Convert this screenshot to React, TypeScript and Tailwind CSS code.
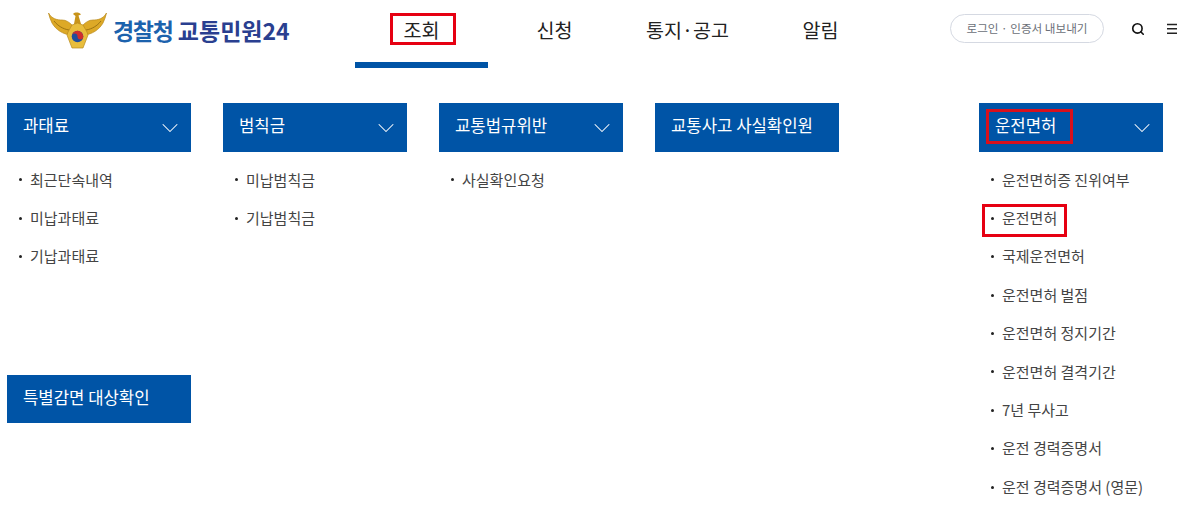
import React from "react";
import { ChevronDown, Search } from "lucide-react";

const font = "font-['Noto_Sans_CJK_KR','Noto_Sans',sans-serif]";

function Emblem() {
  return (
    <svg width="60" height="38" viewBox="0 0 60 38" className="shrink-0">
      {/* wings */}
      <path d="M0.5 2 C4 8 9 9 14 9 C18 9 21 11 24 14 L22 24 C15 23 8 19 4 12 C2.5 9 1.2 5 0.5 2 Z" fill="#dda927" stroke="#b98a1c" strokeWidth="0.7" />
      <path d="M58.5 2 C55 8 50 9 45 9 C41 9 38 11 35 14 L37 24 C44 23 51 19 55 12 C56.5 9 57.8 5 58.5 2 Z" fill="#dda927" stroke="#b98a1c" strokeWidth="0.7" />
      <path d="M6 10 C10 15 15 18 21 19 M53 10 C49 15 44 18 38 19" stroke="#9c7412" strokeWidth="1" fill="none" />
      {/* head */}
      <path d="M25 3 C27 1 31 1 33 3.5 L30.5 4.5 L33 13 L26 13 L27.5 5 Z" fill="#c8941a" />
      {/* shield */}
      <path d="M20 21 L24 14 L29.5 12 L35 14 L39 21 L40 24 L35 37 L24 37 L19 24 Z" fill="#e8bd3c" stroke="#b98a1c" strokeWidth="0.7" />
      <circle cx="29.5" cy="25.5" r="5.8" fill="#1f4e9c" />
      <path d="M23.7 25.5 A5.8 5.8 0 0 1 35.3 25.5 A2.9 2.9 0 0 1 29.5 25.5 A2.9 2.9 0 0 0 23.7 25.5 Z" fill="#cf2e2e" />
    </svg>
  );
}

function Hamburger() {
  return (
    <svg width="12" height="12" viewBox="0 0 12 12" className="text-[#222]">
      <path d="M1 1.5h10M1 5.8h10M1 10.2h10" stroke="currentColor" strokeWidth="1.6" />
    </svg>
  );
}

function Header() {
  const nav = ["조회", "신청", "통지·공고", "알림"];
  return (
    <header className="flex h-[68px] items-start">
      <div className="flex w-[355px] items-center gap-[5px] pl-[48px] pt-[11px]">
        <Emblem />
        <div className="whitespace-nowrap text-[23px] leading-[38px] font-bold">
          <span className="tracking-[-1.3px] text-[#1c62ad]">경찰청</span>{" "}
          <span className="text-[#2a3f90]">교통민원24</span>
        </div>
      </div>
      <nav className="flex">
        {nav.map((label, i) => (
          <div
            key={label}
            className={`flex h-[68px] w-[133px] justify-center pt-[15px] text-[19.6px] leading-[30px] text-[#222] ${
              i === 0 ? "border-b-[6px] border-[#0054a6]" : ""
            }`}
          >
            {label}
          </div>
        ))}
      </nav>
      <div className="ml-auto flex items-center pr-[6px] pt-[14px]">
        <div className="flex h-[29px] w-[154px] items-center justify-center rounded-full border border-[#d5d9e2] text-[11.6px] text-[#6b6f78]">
          로그인 · 인증서 내보내기
        </div>
        <Search size={14} strokeWidth={2.8} className="ml-[27px] text-[#111]" />
        <div className="ml-[21px] flex">
          <Hamburger />
        </div>
      </div>
    </header>
  );
}

function TitleBar({ title, arrow = true, short = false }: { title: string; arrow?: boolean; short?: boolean }) {
  return (
    <div
      className={`flex items-center justify-between bg-[#0054a6] pl-4 pr-[7px] text-[16.7px] text-white ${
        short ? "h-[48px]" : "h-[49px]"
      }`}
    >
      <span className="pb-[3px]">{title}</span>
      {arrow && <ChevronDown size={28} strokeWidth={0.9} />}
    </div>
  );
}

function Menu({
  title,
  items = [],
  arrow = true,
  short = false,
}: {
  title: string;
  items?: string[];
  arrow?: boolean;
  short?: boolean;
}) {
  return (
    <div className="w-[184px]">
      <TitleBar title={title} arrow={arrow} short={short} />
      {items.length > 0 && (
        <ul className="mt-[8.7px]">
          {items.map((item) => (
            <li key={item} className="flex h-[38.4px] items-center pl-3 text-[15px] whitespace-nowrap text-[#444]">
              <span className="mr-[8px] h-[3px] w-[3px] rounded-full bg-[#222]" />
              {item}
            </li>
          ))}
        </ul>
      )}
    </div>
  );
}

export default function App() {
  return (
    <div className={`relative h-[506px] w-[1184px] overflow-hidden bg-white ${font}`}>
      <Header />
      <main className="flex gap-8 pl-[7px] pt-[35px]">
        <div className="flex w-[184px] flex-col gap-[99px]">
          <Menu title="과태료" items={["최근단속내역", "미납과태료", "기납과태료"]} />
          <Menu title="특별감면 대상확인" arrow={false} short />
        </div>
        <Menu title="범칙금" items={["미납범칙금", "기납범칙금"]} />
        <Menu title="교통법규위반" items={["사실확인요청"]} />
        <Menu title="교통사고 사실확인원" arrow={false} />
        <div className="ml-[108px]">
          <Menu
            title="운전면허"
            items={[
              "운전면허증 진위여부",
              "운전면허",
              "국제운전면허",
              "운전면허 벌점",
              "운전면허 정지기간",
              "운전면허 결격기간",
              "7년 무사고",
              "운전 경력증명서",
              "운전 경력증명서 (영문)",
            ]}
          />
        </div>
      </main>
      {/* red annotation boxes */}
      <div className="absolute left-[390px] top-[13px] h-[32px] w-[66px] border-[3px] border-[#e60012]" />
      <div className="absolute left-[986px] top-[109px] h-[35px] w-[87px] border-[3px] border-[#d8101c]" />
      <div className="absolute left-[982px] top-[204px] h-[33px] w-[85px] border-[3px] border-[#e60012]" />
    </div>
  );
}
